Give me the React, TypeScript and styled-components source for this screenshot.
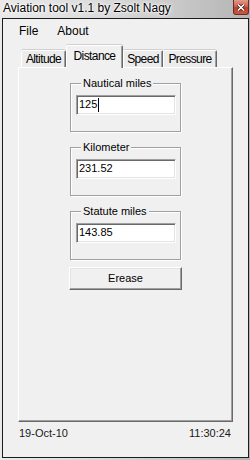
import React from "react";
import styled, { createGlobalStyle } from "styled-components";

const GlobalStyle = createGlobalStyle`
  html, body { margin: 0; padding: 0; }
  body {
    background: #d4d4d4;
    font-family: "Liberation Sans", Arial, sans-serif;
  }
`;

const Window = styled.div`
  width: 250px;
  height: 460px;
  display: flex;
  flex-direction: column;
  background: linear-gradient(90deg, #e9e9e9 0%, #dadada 40%, #c9c9c9 70%, #b4b4b4 100%);
  overflow: hidden;
`;

const TitleBar = styled.div`
  height: 18px;
  display: flex;
  align-items: flex-start;
  justify-content: space-between;
  padding: 0 1px 0 3px;
  box-sizing: border-box;
`;

const Title = styled.div`
  font-size: 12px;
  line-height: 16px;
  color: #000;
  text-shadow: 0 0 6px #fff, 0 0 3px #fff, 0 0 2px #fff;
`;

const CloseButton = styled.div`
  width: 16px;
  height: 15px;
  box-sizing: border-box;
  border: 1px solid #6d2b22;
  border-top: none;
  border-radius: 0 0 3px 3px;
  background: linear-gradient(180deg, #e29a8c 0%, #d0624f 45%, #b8402c 55%, #c85a44 100%);
  display: flex;
  align-items: center;
  justify-content: center;
`;

const Client = styled.div`
  margin: 0 1px 0 2px;
  height: 440px;
  box-sizing: border-box;
  border: 1px solid #1c1c1c;
  background: #f0f0f0;
  display: flex;
  flex-direction: column;
`;

const MenuBar = styled.div`
  height: 24px;
  display: flex;
  align-items: center;
  padding-left: 16px;
  gap: 19px;
`;

const MenuItem = styled.span`
  font-size: 12px;
  line-height: 14px;
  color: #000;
`;

const TabArea = styled.div`
  margin: 2px 15px 0 15px;
  display: flex;
  flex-direction: column;
`;

const TabStrip = styled.div`
  height: 22px;
  display: flex;
  align-items: flex-end;
  padding-left: 3px;
  position: relative;
  z-index: 1;
`;

const Tab = styled.div<{ $active?: boolean; $w: number }>`
  width: ${(p) => p.$w}px;
  height: ${(p) => (p.$active ? 23 : 17)}px;
  margin-bottom: ${(p) => (p.$active ? -1 : 0)}px;
  box-sizing: border-box;
  padding-top: ${(p) => (p.$active ? 3 : 1)}px;
  text-align: center;
  font-size: 12px;
  line-height: 14px;
  letter-spacing: -0.6px;
  color: #000;
  background: ${(p) => (p.$active ? "#f0f0f0" : "#ececec")};
  border-top: 1px solid #ffffff;
  border-left: 1px solid #ffffff;
  border-right: 1px solid #696969;
  box-shadow: inset -1px 0 0 #a0a0a0, 0 -1px 0 #d0d0d0;
  border-radius: 2px 2px 0 0;
`;

const Panel = styled.div`
  height: 355px;
  box-sizing: border-box;
  border-top: 1px solid #ffffff;
  border-left: 1px solid #ffffff;
  border-right: 1px solid #696969;
  border-bottom: 1px solid #696969;
  box-shadow: inset -1px -1px 0 #a0a0a0;
  background: #f0f0f0;
  display: flex;
  flex-direction: column;
  align-items: flex-start;
  padding: 15px 0 0 51px;
`;

const Groups = styled.div`
  display: flex;
  flex-direction: column;
  gap: 15px;
`;

const Group = styled.div`
  width: 111px;
  height: 49px;
  box-sizing: border-box;
  border: 1px solid #a0a0a0;
  box-shadow: 1px 1px 0 #ffffff, inset 1px 1px 0 #ffffff;
  display: flex;
  flex-direction: column;
  align-items: flex-start;
  padding-left: 5px;
`;

const Legend = styled.span`
  margin: -7px 0 0 5px;
  padding: 0 2px;
  background: #f0f0f0;
  font-size: 11px;
  line-height: 13px;
  color: #000;
`;

const TextBox = styled.div`
  margin-top: 5px;
  width: 100px;
  height: 20px;
  box-sizing: border-box;
  background: #fff;
  border-top: 1px solid #a0a0a0;
  border-left: 1px solid #a0a0a0;
  border-right: 1px solid #ffffff;
  border-bottom: 1px solid #ffffff;
  box-shadow: inset 1px 1px 0 #696969, inset -1px -1px 0 #e3e3e3;
  padding: 2px 0 0 2px;
  font-size: 11px;
  line-height: 13px;
  color: #000;
  display: flex;
  align-items: flex-start;
`;

const Caret = styled.span`
  display: inline-block;
  width: 1px;
  height: 14px;
  margin-left: 1px;
  background: #000;
`;

const Button = styled.div`
  margin: 7px 0 0 -1px;
  width: 113px;
  height: 23px;
  box-sizing: border-box;
  background: #f0f0f0;
  border-top: 1px solid #ffffff;
  border-left: 1px solid #ffffff;
  border-right: 1px solid #696969;
  border-bottom: 1px solid #696969;
  box-shadow: inset -1px -1px 0 #a0a0a0, inset 1px 1px 0 #e3e3e3;
  display: flex;
  align-items: center;
  justify-content: center;
  font-size: 11px;
  line-height: 13px;
  color: #000;
`;

const Footer = styled.div`
  display: flex;
  justify-content: space-between;
  padding: 5px 17px 0 16px;
  font-size: 11px;
  line-height: 13px;
  color: #1a1a1a;
`;

const fields = [
  { label: "Nautical miles", value: "125", caret: true },
  { label: "Kilometer", value: "231.52" },
  { label: "Statute miles", value: "143.85" },
];

const tabs = [
  { name: "Altitude", w: 45 },
  { name: "Distance", w: 57, active: true },
  { name: "Speed", w: 40 },
  { name: "Pressure", w: 54 },
];

export default function App() {
  return (
    <>
      <GlobalStyle />
      <Window>
        <TitleBar>
          <Title>Aviation tool v1.1 by Zsolt Nagy</Title>
          <CloseButton>
            <svg width="8" height="7" viewBox="0 0 8 7">
              <path d="M1 0.5 L7 6.5 M7 0.5 L1 6.5" stroke="#3a1410" strokeWidth="3" />
              <path d="M1 0.5 L7 6.5 M7 0.5 L1 6.5" stroke="#ffffff" strokeWidth="1.6" />
            </svg>
          </CloseButton>
        </TitleBar>
        <Client>
          <MenuBar>
            <MenuItem>File</MenuItem>
            <MenuItem>About</MenuItem>
          </MenuBar>
          <TabArea>
            <TabStrip>
              {tabs.map((t) => (
                <Tab key={t.name} $w={t.w} $active={t.active}>
                  {t.name}
                </Tab>
              ))}
            </TabStrip>
            <Panel>
              <Groups>
                {fields.map((f) => (
                  <Group key={f.label}>
                    <Legend>{f.label}</Legend>
                    <TextBox>
                      {f.value}
                      {f.caret && <Caret />}
                    </TextBox>
                  </Group>
                ))}
              </Groups>
              <Button>Erease</Button>
            </Panel>
          </TabArea>
          <Footer>
            <span>19-Oct-10</span>
            <span>11:30:24</span>
          </Footer>
        </Client>
      </Window>
    </>
  );
}
